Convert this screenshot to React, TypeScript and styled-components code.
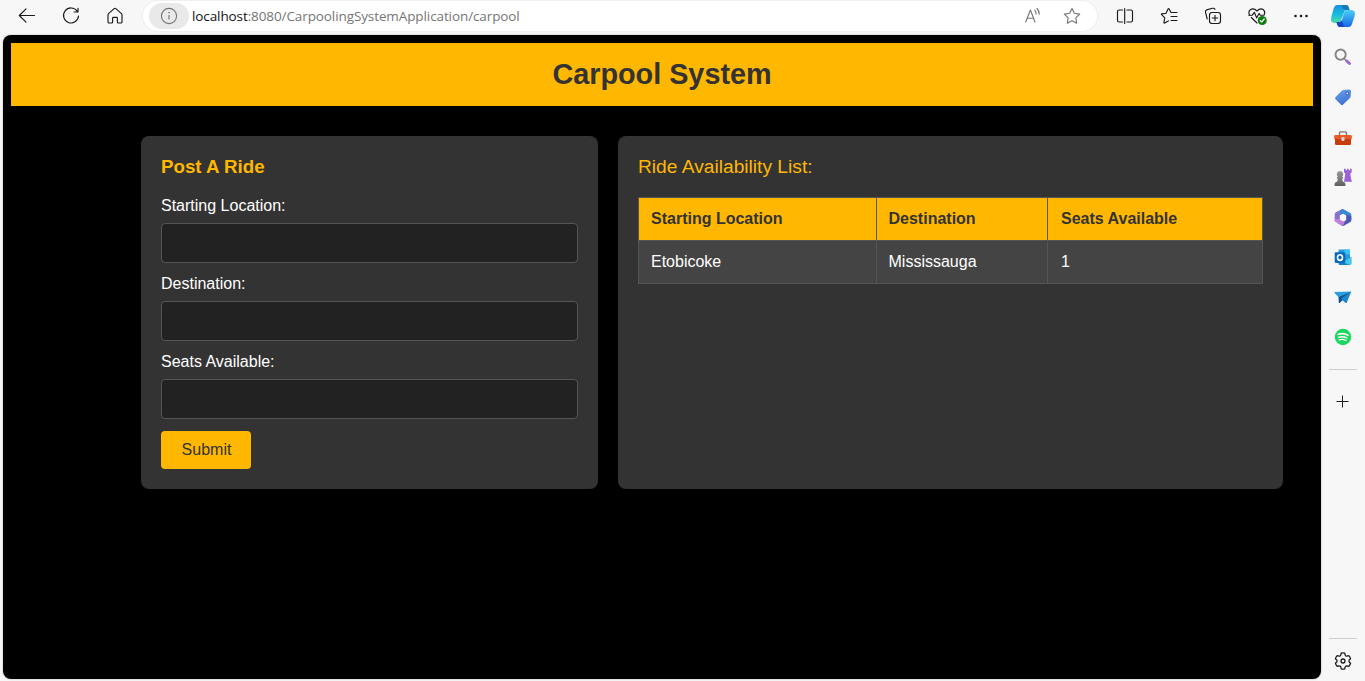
import React from "react";
import styled, { createGlobalStyle } from "styled-components";

const GlobalStyle = createGlobalStyle`
  * { box-sizing: border-box; }
  html, body { margin: 0; padding: 0; }
  body {
    background: #f7f7f7;
    font-family: "Liberation Sans", Arial, sans-serif;
    font-size: 16px;
    overflow: hidden;
  }
`;

const YELLOW = "#ffb700";

const Window = styled.div`
  display: flex;
  width: 1365px;
  height: 681px;
  background: #f7f7f7;
`;

const Main = styled.div`
  display: flex;
  flex-direction: column;
  width: 1321px;
`;

const Toolbar = styled.div`
  display: flex;
  align-items: center;
  height: 35px;
  padding: 0 0 3px 7px;
`;

const ButtonGroup = styled.div`
  display: flex;
  gap: 4px;
`;

const IconButton = styled.button`
  display: flex;
  align-items: center;
  justify-content: center;
  width: 40px;
  height: 30px;
  padding: 0;
  border: 0;
  background: none;
`;

const AddressBar = styled.div`
  display: flex;
  align-items: center;
  flex: 1;
  height: 30px;
  margin: 0 8px;
  padding: 0 5px 0 6px;
  border-radius: 15px;
  background: #fff;
  box-shadow: 0 0 1px 1px #efefef;
`;

const SiteInfo = styled.div`
  display: flex;
  align-items: center;
  justify-content: center;
  width: 40px;
  height: 26px;
  border-radius: 13px;
  background: #e9e9e9;
`;

const Url = styled.div`
  flex: 1;
  margin-left: 3px;
  font-family: "Open Sans", "Noto Sans", sans-serif;
  font-size: 13.5px;
  line-height: 20px;
  letter-spacing: -0.1px;
  color: #767676;
  white-space: nowrap;
`;

const Host = styled.span`
  color: #111;
`;

const Page = styled.div`
  flex: 1;
  margin: 0 0 2px 3px;
  padding: 8px;
  border-radius: 8px;
  background: #000;
  box-shadow: 0 0 2px rgba(0, 0, 0, 0.3);
`;

const Banner = styled.header`
  padding: 15px;
  background: ${YELLOW};
  text-align: center;
`;

const BannerTitle = styled.h1`
  margin: 0;
  font-size: 28.8px;
  line-height: 33px;
  color: #333;
`;

const Content = styled.main`
  display: flex;
  gap: 20px;
  height: 353px;
  margin: 30px 30px 0 130px;
`;

const Card = styled.section<{ $width: number }>`
  width: ${(p) => p.$width}px;
  padding: 20px;
  border-radius: 8px;
  background: #333;
`;

const FormTitle = styled.h3`
  margin: 0 0 19px;
  font-size: 18.72px;
  line-height: 22px;
  color: ${YELLOW};
`;

const ListTitle = styled.div`
  margin-bottom: 19px;
  font-size: 19.2px;
  line-height: 22px;
  color: ${YELLOW};
`;

const Field = styled.label`
  display: flex;
  flex-direction: column;
  gap: 8px;
  margin-bottom: 12px;
  line-height: 18px;
  color: #fff;
`;

const Input = styled.input`
  width: 100%;
  height: 40px;
  padding: 10px;
  border: 1px solid #555;
  border-radius: 4px;
  background: #222;
  color: #fff;
  font: inherit;
  outline: none;
`;

const Submit = styled.button`
  display: block;
  width: 90px;
  height: 38px;
  margin-top: 12px;
  padding: 0 0 1px 1px;
  border: 0;
  border-radius: 4px;
  background: ${YELLOW};
  color: #333;
  font-family: inherit;
  font-size: 16px;
`;

const Table = styled.table`
  width: 624px;
  border-collapse: collapse;
  table-layout: fixed;
  line-height: 18px;
  text-align: left;
`;

const HeadCell = styled.th<{ $inset: number }>`
  padding: 12px 12px 12px ${(p) => p.$inset}px;
  border: 1px solid #555;
  background: ${YELLOW};
  color: #333;
`;

const Cell = styled.td<{ $inset: number }>`
  padding: 12px 12px 12px ${(p) => p.$inset}px;
  border: 1px solid #555;
  background: #444;
  color: #fff;
`;

const Sidebar = styled.aside`
  display: flex;
  flex-direction: column;
  align-items: center;
  width: 44px;
`;

const SideItem = styled.div<{ $height?: number; $after?: number }>`
  display: flex;
  flex: none;
  align-items: center;
  justify-content: center;
  height: ${(p) => p.$height ?? 40}px;
  margin-bottom: ${(p) => p.$after ?? 0}px;
`;

const Divider = styled.div<{ $bottom?: boolean }>`
  flex: none;
  width: 28px;
  height: 1px;
  margin: ${(p) => (p.$bottom ? "auto 0 2px" : "12px 0")};
  background: #cdcdcd;
`;

type LineProps = { color?: string; weight?: number; children: React.ReactNode };

const Line = ({ color = "#1b1b1b", weight = 1.15, children }: LineProps) => (
  <svg
    width="20"
    height="20"
    viewBox="0 0 20 20"
    fill="none"
    stroke={color}
    strokeWidth={weight}
    strokeLinecap="round"
    strokeLinejoin="round"
  >
    {children}
  </svg>
);

const BackIcon = () => (
  <Line>
    <path d="M17.5 9.5H2.5M9 2.8L2.3 9.5L9 16.2" />
  </Line>
);

const ReloadIcon = () => (
  <Line>
    <path d="M16.2 5.2A7.5 7.5 0 1 0 17.5 10M17 2.3V6H13" />
  </Line>
);

const HomeIcon = () => (
  <Line>
    <path d="M3 8.7Q3 8.1 3.5 7.6L9.2 2.6Q10 2 10.8 2.6L16.5 7.6Q17 8.1 17 8.7V16Q17 17 16 17H13.3Q12.4 17 12.4 16V12.2Q12.4 11.3 11.5 11.3H8.5Q7.6 11.3 7.6 12.2V16Q7.6 17 6.7 17H4Q3 17 3 16Z" />
  </Line>
);

const InfoIcon = () => (
  <Line color="#767676">
    <circle cx="10" cy="10" r="7.6" />
    <path d="M10 9V13.5" strokeLinecap="butt" />
    <circle cx="10" cy="6.7" r="0.4" fill="#767676" strokeWidth="0.7" />
  </Line>
);

const ReadAloudIcon = () => (
  <Line color="#767676">
    <path d="M3.7 16L8.4 4L13 16M5.2 12.2H11.5M12.7 4.2Q14.2 5.7 14.1 8M14.9 2.5Q17.4 4.8 17.2 8.2" />
  </Line>
);

const STAR =
  "M10 2.5L12.4 7.3L17.7 8.1L13.8 11.9L14.7 17.2L10 14.7L5.3 17.2L6.2 11.9L2.3 8.1L7.6 7.3Z";

const StarIcon = () => (
  <Line color="#767676">
    <path d={STAR} />
  </Line>
);

const SplitIcon = () => (
  <Line>
    <path d="M7.5 4H4Q2.5 4 2.5 5.5V14.5Q2.5 16 4 16H7.5M12 4H16Q17.5 4 17.5 5.5V14.5Q17.5 16 16 16H12M9.7 2.5V17.5" />
  </Line>
);

const FavoritesIcon = () => (
  <Line>
    <path d="M18 6.5H12L10 2.8Q9.6 2.1 9.2 2.8L7 7.2L2.8 7.9Q2.1 8.1 2.6 8.7L5.8 11.9L4.9 16.6Q4.9 17.4 5.6 17L9.4 14.9M12 10.5H18M12 14.5H18" />
  </Line>
);

const CollectionsIcon = () => (
  <Line>
    <rect x="6.5" y="6.5" width="11" height="11" rx="2.4" />
    <path d="M12 9.3V14.7M9.3 12H14.7M4.2 13L2.5 6.2Q2.1 4.5 3.7 3.9L9.4 2.3Q11.2 1.9 12 3.3" />
  </Line>
);

const HealthIcon = () => (
  <Line>
    <path d="M2.6 9Q.8 5.7 3.4 3.7Q6.6 1.6 10 5Q13.4 1.6 16.4 3.7Q18.5 5.6 17.3 8.4M4.3 11.5L10 17" />
    <path d="M1.8 9.2H5.3L7.4 6.3L9.6 11.9L12 7.4L13.2 9.2H17" />
    <circle cx="15.2" cy="14.5" r="4.5" fill="#107c10" stroke="none" />
    <path d="M13.2 14.6L14.6 16L17.3 13" stroke="#fff" />
  </Line>
);

const MoreIcon = () => (
  <svg width="20" height="20" viewBox="0 0 20 20" fill="#1b1b1b">
    <circle cx="4.5" cy="10" r="1.3" />
    <circle cx="10" cy="10" r="1.3" />
    <circle cx="15.5" cy="10" r="1.3" />
  </svg>
);

const CopilotIcon = () => (
  <svg width="26" height="26" viewBox="0 0 26 26">
    <defs>
      <linearGradient id="cpA" x1="0" y1="0" x2="0" y2="1">
        <stop offset="0" stopColor="#1a8fe0" />
        <stop offset="0.55" stopColor="#18bde0" />
        <stop offset="1" stopColor="#55dba0" />
      </linearGradient>
      <linearGradient id="cpB" x1="0" y1="0" x2="0" y2="1">
        <stop offset="0" stopColor="#4fd0f5" />
        <stop offset="0.5" stopColor="#2f9cf0" />
        <stop offset="1" stopColor="#1b66e5" />
      </linearGradient>
    </defs>
    <path d="M7 2H16Q18 2 18.7 4.3L19.5 7H15L10 20H4.5Q0 20 1.3 14L3.8 5Q4.8 2 7 2Z" fill="url(#cpA)" />
    <path d="M11 2H16Q18 2 18.7 4.3L19.5 7H15.5Q13.5 7 12.7 4.5Z" fill="#1479b8" />
    <path d="M16 7H21.5Q26 7 24.6 13L22 21Q21 24 18.5 24H10Q8 24 7.2 21.5L6.5 19H9.5Q11.4 19 12 17L14.2 9Q14.8 7 16 7Z" fill="url(#cpB)" />
    <path d="M6.5 19H9.7Q11.3 19 11.9 17.3L14 24H10Q8 24 7.2 21.5Z" fill="#1746c7" />
  </svg>
);

const SearchIcon = () => (
  <svg width="20" height="20" viewBox="0 0 20 20" fill="none" strokeLinecap="round">
    <path d="M11.5 12L14 14" stroke="#858585" strokeWidth="1.6" />
    <circle cx="7.6" cy="7.6" r="5.1" stroke="#858585" strokeWidth="1.9" />
    <path d="M13.7 14L16.5 16.5" stroke="#9f65d2" strokeWidth="2.9" />
  </svg>
);

const TagIcon = () => (
  <svg width="20" height="20" viewBox="0 0 20 20">
    <defs>
      <linearGradient id="tag" x1="0" y1="0" x2="0.4" y2="1">
        <stop offset="0" stopColor="#6aa5f2" />
        <stop offset="1" stopColor="#3f71d3" />
      </linearGradient>
    </defs>
    <path d="M10.3 3L16.2 2.4Q18 2.4 18 4.2L17.6 9.6Q17.5 10.4 16.9 11L10.2 17.6Q9 18.8 7.8 17.6L2.5 12.3Q1.5 11.2 2.6 10.1L8.9 3.7Q9.5 3.1 10.3 3Z" fill="url(#tag)" />
    <circle cx="14.2" cy="6.4" r="1.4" fill="#e3efff" stroke="#2a4489" strokeWidth="0.9" />
  </svg>
);

const ToolboxIcon = () => (
  <svg width="20" height="20" viewBox="0 0 20 20">
    <path d="M6.5 8V6Q6.5 4.9 7.6 4.9H12.4Q13.5 4.9 13.5 6V8" fill="none" stroke="#777" strokeWidth="1.4" />
    <rect x="1.2" y="8" width="17.6" height="4.5" rx="1.3" fill="#e75b27" />
    <path d="M2 12H18V16.8Q18 18 16.8 18H3.2Q2 18 2 16.8Z" fill="#c83b0e" />
    <rect x="8.4" y="10" width="3.2" height="4" rx="1.3" fill="#d4d4d4" />
  </svg>
);

const GamesIcon = () => (
  <svg width="20" height="20" viewBox="0 0 20 20">
    <defs>
      <linearGradient id="pawn" x1="0" y1="0" x2="0" y2="1">
        <stop offset="0" stopColor="#999" />
        <stop offset="1" stopColor="#606060" />
      </linearGradient>
    </defs>
    <path d="M11 1.8H12.8V3.3H14V1.8H15.7V3.3H17V1.8H18.7V5.3L17.3 6.6L18 11.8L19 14.8H11L12.3 6.6L11 5.3Z" fill="#9a63d5" />
    <path d="M7 4A3.3 3.3 0 0 1 9.2 9.7L10.2 10.5V11.5H9.2L9.7 14.5Q12.6 15.3 12.6 18.1Q12.6 19 11.6 19H2.4Q1.4 19 1.4 18.1Q1.4 15.3 4.3 14.5L4.8 11.5H3.8V10.5L4.8 9.7A3.3 3.3 0 0 1 7 4Z" fill="url(#pawn)" />
  </svg>
);

const OfficeIcon = () => (
  <svg width="20" height="20" viewBox="0 0 20 20">
    <g transform="translate(0 .5)">
      <path d="M8.2 2L2.6 5.1Q1.7 5.7 1.7 6.8V13.7L5.5 15.5L7 12.2V7.8L11.2 5.3L10.6 2Q9.4 1.3 8.2 2Z" fill="#8772d3" />
      <path d="M8 1.9Q9.5 1.2 11 2L17.3 5.5Q18.3 6 18.3 7.2V12.8L13 11.5V8.3L10 6.5L7 8V5.2Q7 2.6 9.5 1.5Z" fill="#3d87d7" />
      <path d="M18.3 9V12.8Q18.3 14 17.3 14.6L11.3 18Q10 18.8 8.7 18L4.5 15.6H8.5L13 12.8V7.5L17 8Z" fill="#4d56b5" />
      <path d="M1.7 11.5L7 12L10 13.7L11.5 13V15Q10.5 18.7 7.8 17.5L2.8 14.6Q1.7 14 1.7 12.8Z" fill="#bf82dc" />
      <path d="M10 6.2L13.2 8V12L10 13.8L6.8 12V8Z" fill="#f7f7f7" />
    </g>
  </svg>
);

const OutlookIcon = () => (
  <svg width="20" height="20" viewBox="0 0 20 20">
    <g transform="translate(0 .5)">
      <rect x="5.5" y="2" width="11.5" height="11" rx="1" fill="#2898df" />
      <path d="M11.3 2H17V7H11.3Z" fill="#3cc5f4" />
      <path d="M5.5 9.5L12 13L18.3 9.5V16Q18.3 17.5 16.8 17.5H7Q5.5 17.5 5.5 16Z" fill="#1682cb" />
      <path d="M18.3 9.5V16Q18.3 17.5 16.8 17.5L9.5 14.4Z" fill="#43c8ef" />
      <rect x="1.7" y="4.8" width="10.6" height="10.6" rx="1.1" fill="#0869b8" />
      <ellipse cx="7" cy="10.1" rx="2.5" ry="2.8" fill="none" stroke="#fff" strokeWidth="1.6" />
    </g>
  </svg>
);

const DropIcon = () => (
  <svg width="20" height="20" viewBox="0 0 20 20">
    <path d="M18.3 4.6L1.8 5Q1.2 5.3 1.6 5.9L6 10.8Z" fill="#2b9fdd" />
    <path d="M18.3 4.6L5.5 10.2L5.8 15.8Q6.2 16.4 6.9 15.8L9.3 13.4Z" fill="#124f8c" />
    <path d="M18.3 4.6L7.8 11.8L12.6 16Q13.4 16.4 13.8 15.5Z" fill="#1b86cf" />
  </svg>
);

const MusicIcon = () => (
  <svg width="20" height="20" viewBox="0 0 20 20" fill="none" stroke="#fff" strokeLinecap="round">
    <circle cx="10" cy="10" r="8.2" fill="#1ed760" stroke="none" />
    <path d="M5.2 7.3Q10.5 5.8 15 8.2" strokeWidth="1.7" />
    <path d="M5.7 10.2Q10.2 9 14 11" strokeWidth="1.4" />
    <path d="M6.2 12.8Q9.8 11.8 13 13.5" strokeWidth="1.2" />
  </svg>
);

const PlusIcon = () => (
  <svg width="20" height="20" viewBox="0 0 20 20" fill="none" stroke="#1b1b1b" strokeWidth="1">
    <path d="M3.5 9.5H15.5M9.5 3.5V15.5" />
  </svg>
);

const GearIcon = () => (
  <Line weight={1.3}>
    <path d="M8.2 2.1Q10 1.6 11.8 2.1L12.2 4.1Q12.6 5.3 13.9 5.2L15.8 4.6Q17.1 5.9 17.6 7.8L16.2 9.1Q15.5 10 16.2 10.9L17.6 12.2Q17.1 14.1 15.8 15.4L13.9 14.8Q12.6 14.7 12.2 15.9L11.8 17.9Q10 18.4 8.2 17.9L7.8 15.9Q7.4 14.7 6.1 14.8L4.2 15.4Q2.9 14.1 2.4 12.2L3.8 10.9Q4.5 10 3.8 9.1L2.4 7.8Q2.9 5.9 4.2 4.6L6.1 5.2Q7.4 5.3 7.8 4.1Z" />
    <circle cx="10" cy="10" r="2" />
  </Line>
);

const leftTools = [BackIcon, ReloadIcon, HomeIcon];
const rightTools = [SplitIcon, FavoritesIcon, CollectionsIcon, HealthIcon, MoreIcon];
const sideApps = [
  SearchIcon,
  TagIcon,
  ToolboxIcon,
  GamesIcon,
  OfficeIcon,
  OutlookIcon,
  DropIcon,
  MusicIcon,
];
const fields = ["Starting Location:", "Destination:", "Seats Available:"];
const columns = [
  { name: "Starting Location", width: 238, inset: 12 },
  { name: "Destination", width: 171, inset: 11.5 },
  { name: "Seats Available", width: 215, inset: 13 },
];
const rides = [["Etobicoke", "Mississauga", "1"]];

export default function App() {
  return (
    <Window>
      <GlobalStyle />
      <Main>
        <Toolbar>
          <ButtonGroup>
            {leftTools.map((Icon, i) => (
              <IconButton key={i}>
                <Icon />
              </IconButton>
            ))}
          </ButtonGroup>
          <AddressBar>
            <SiteInfo>
              <InfoIcon />
            </SiteInfo>
            <Url>
              <Host>localhost</Host>:8080/CarpoolingSystemApplication/carpool
            </Url>
            <IconButton>
              <ReadAloudIcon />
            </IconButton>
            <IconButton>
              <StarIcon />
            </IconButton>
          </AddressBar>
          <ButtonGroup>
            {rightTools.map((Icon, i) => (
              <IconButton key={i}>
                <Icon />
              </IconButton>
            ))}
          </ButtonGroup>
        </Toolbar>
        <Page>
          <Banner>
            <BannerTitle>Carpool System</BannerTitle>
          </Banner>
          <Content>
            <Card $width={457}>
              <FormTitle>Post A Ride</FormTitle>
              {fields.map((name) => (
                <Field key={name}>
                  {name}
                  <Input type="text" />
                </Field>
              ))}
              <Submit type="button">Submit</Submit>
            </Card>
            <Card $width={665}>
              <ListTitle>Ride Availability List:</ListTitle>
              <Table>
                <colgroup>
                  {columns.map((c) => (
                    <col key={c.name} width={c.width} />
                  ))}
                </colgroup>
                <thead>
                  <tr>
                    {columns.map((c) => (
                      <HeadCell key={c.name} $inset={c.inset}>
                        {c.name}
                      </HeadCell>
                    ))}
                  </tr>
                </thead>
                <tbody>
                  {rides.map((ride) => (
                    <tr key={ride.join()}>
                      {ride.map((value, i) => (
                        <Cell key={value} $inset={columns[i].inset}>
                          {value}
                        </Cell>
                      ))}
                    </tr>
                  ))}
                </tbody>
              </Table>
            </Card>
          </Content>
        </Page>
      </Main>
      <Sidebar>
        <SideItem $height={32} $after={5}>
          <CopilotIcon />
        </SideItem>
        {sideApps.map((Icon, i) => (
          <SideItem key={i}>
            <Icon />
          </SideItem>
        ))}
        <Divider />
        <SideItem>
          <PlusIcon />
        </SideItem>
        <Divider $bottom />
        <SideItem>
          <GearIcon />
        </SideItem>
      </Sidebar>
    </Window>
  );
}
